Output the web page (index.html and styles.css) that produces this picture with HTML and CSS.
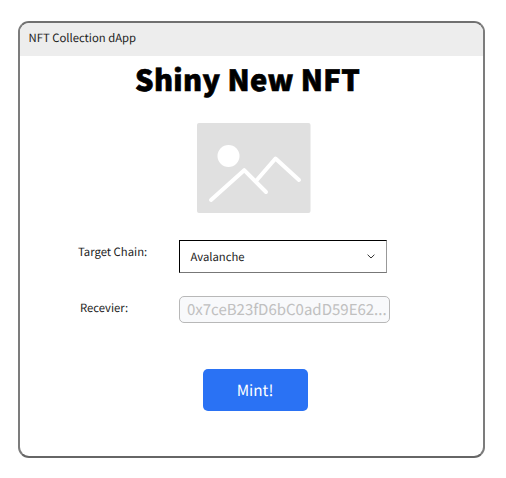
FILE: index.html
```html
<!DOCTYPE html>
<html lang="en">
<head>
<meta charset="utf-8">
<title>NFT Collection dApp</title>
<link rel="stylesheet" href="styles.css">
</head>
<body>
<main class="window">
  <header class="titlebar">NFT Collection dApp</header>
  <h1 class="heading">Shiny New NFT</h1>
  <svg class="preview" viewBox="0 0 114 90" aria-hidden="true">
    <rect width="113.5" height="90" rx="2" fill="#e0e0e0"/>
    <circle cx="31.5" cy="33" r="11" fill="#fff"/>
    <path d="M14 77 47.2 47.2 69 69M59 58 78.5 35.5 102 57" fill="none" stroke="#fff" stroke-width="4" stroke-linecap="round" stroke-linejoin="round"/>
  </svg>
  <div class="row chain">
    <span class="label">Target Chain:</span>
    <div class="select">
      <span class="value">Avalanche</span>
      <svg class="chevron" viewBox="0 0 8 5"><path d="M.6.7 4 4 7.4.7" fill="none" stroke="#333" stroke-width="1"/></svg>
    </div>
  </div>
  <div class="row receiver">
    <span class="label">Recevier:</span>
    <div class="input">0x7ceB23fD6bC0adD59E62...</div>
  </div>
  <button class="mint">Mint!</button>
</main>
</body>
</html>
```
FILE: styles.css
```css
* { box-sizing: border-box; }
body {
  margin: 0;
  padding: 21px 0 0 18px;
  background: #fff;
  color: #222;
  font-family: "Noto Sans CJK SC", "Open Sans", sans-serif;
  font-size: 11.3px;
  text-rendering: geometricPrecision;
}
.window {
  width: 467px;
  height: 437px;
  border: 2px solid #7c7c7c;
  border-top-color: #707070;
  border-bottom-color: #666;
  border-radius: 11px;
  overflow: hidden;
  display: flex;
  flex-direction: column;
}
.titlebar {
  height: 33px;
  flex: none;
  padding-left: 8.5px;
  background: #ededed;
  line-height: 31px;
}
.heading {
  margin: 0 0 0 115px;
  height: 67px;
  flex: none;
  line-height: 46px;
  font-size: 29px;
  letter-spacing: .38px;
  font-weight: 900;
  -webkit-text-stroke: .7px #000;
  color: #000;
  white-space: nowrap;
}
.preview {
  width: 114px;
  height: 90px;
  flex: none;
  margin-left: 177px;
}
.row { display: flex; flex: none; }
.chain { margin-top: 27px; height: 33px; }
.receiver { margin-top: 23px; height: 27px; }
.label { width: 101px; flex: none; margin-left: 58px; line-height: 25px; }
.receiver .label { width: 99px; margin-left: 60px; line-height: 24px; }
.select {
  width: 208px;
  border: 1px solid #000;
  border-right-color: #999;
  border-bottom-color: #777;
  padding: 0 11px 0 10.5px;
  display: flex;
  align-items: center;
  justify-content: space-between;
}
.chevron { width: 8px; height: 5px; }
.input {
  width: 211px;
  border: 1px solid #b8b8b8;
  border-radius: 5px;
  background: #f8f9fb;
  color: #c0c0c0;
  padding-left: 7px;
  font-size: 15px;
  line-height: 25px;
  white-space: nowrap;
}
.mint {
  width: 105px;
  height: 42px;
  margin: 46px 0 0 182.5px;
  padding: 0;
  flex: none;
  align-self: flex-start;
  border: 0;
  border-radius: 5px;
  background: #2a72f4;
  color: #fff;
  font: 15.3px/41px "Noto Sans CJK SC", sans-serif;
  text-rendering: geometricPrecision;
}
```
